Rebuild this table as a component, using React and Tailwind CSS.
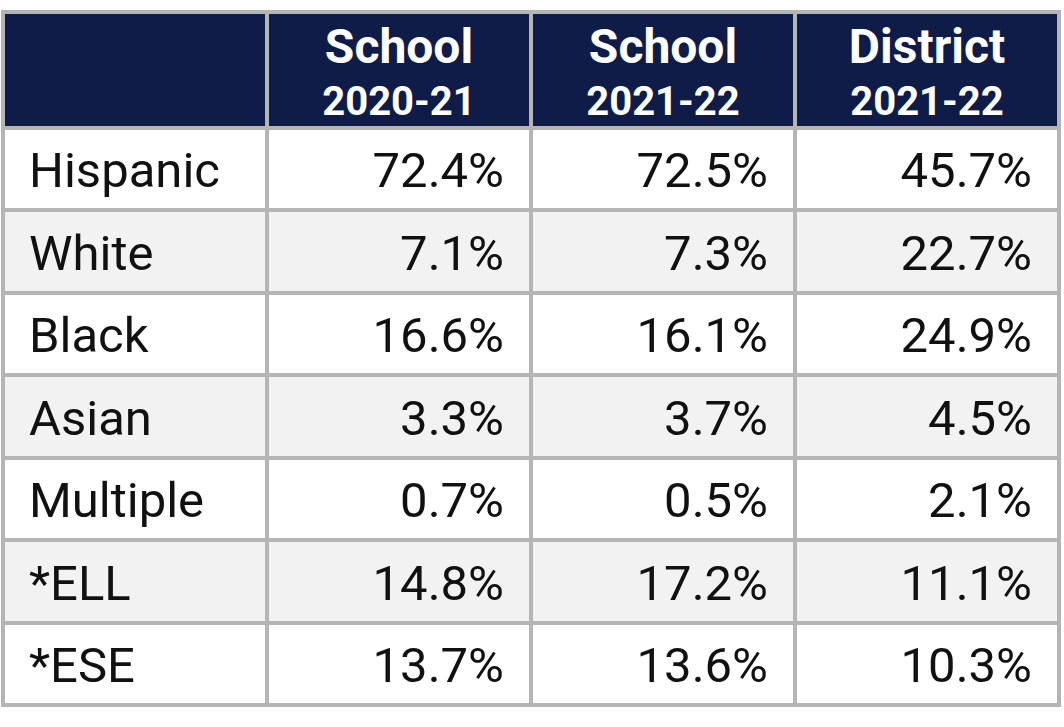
const rows = [
  ["Hispanic", "72.4%", "72.5%", "45.7%"],
  ["White", "7.1%", "7.3%", "22.7%"],
  ["Black", "16.6%", "16.1%", "24.9%"],
  ["Asian", "3.3%", "3.7%", "4.5%"],
  ["Multiple", "0.7%", "0.5%", "2.1%"],
  ["*ELL", "14.8%", "17.2%", "11.1%"],
  ["*ESE", "13.7%", "13.6%", "10.3%"],
];

const heads = [
  ["School", "2020-21"],
  ["School", "2021-22"],
  ["District", "2021-22"],
];

export default function App() {
  return (
    <div className="w-[1064px] h-[727px] bg-white pt-[10px] pl-[1px]" style={{ fontFamily: "Roboto, 'Liberation Sans', sans-serif" }}>
      <div className="grid grid-cols-4 grid-rows-[112px_repeat(7,1fr)] gap-[4px] p-[4px] w-[1060px] h-[697px] bg-[#b5b5b5]">
        <div className="bg-[#0f1c48]" />
        {heads.map(([a, b], i) => (
          <div key={i} className="bg-[#0f1c48] text-white font-bold flex flex-col items-center pt-[7px]">
            <span className="text-[48px] leading-[52px]">{a}</span>
            <span className="text-[40px] leading-[58px]">{b}</span>
          </div>
        ))}
        {rows.map((r, i) => {
          const bg = i % 2 === 1 ? "bg-[#f2f2f2]" : "bg-white";
          return [
            <div key={i + "l"} className={`${bg} flex items-center pl-[24px] pt-[4px] text-[49px] text-[#111]`}>{r[0]}</div>,
            ...r.slice(1).map((v, j) => (
              <div key={i + "-" + j} className={`${bg} flex items-center justify-end pr-[25px] pt-[4px] text-[49px] text-[#111]`}>{v}</div>
            )),
          ];
        })}
      </div>
    </div>
  );
}
